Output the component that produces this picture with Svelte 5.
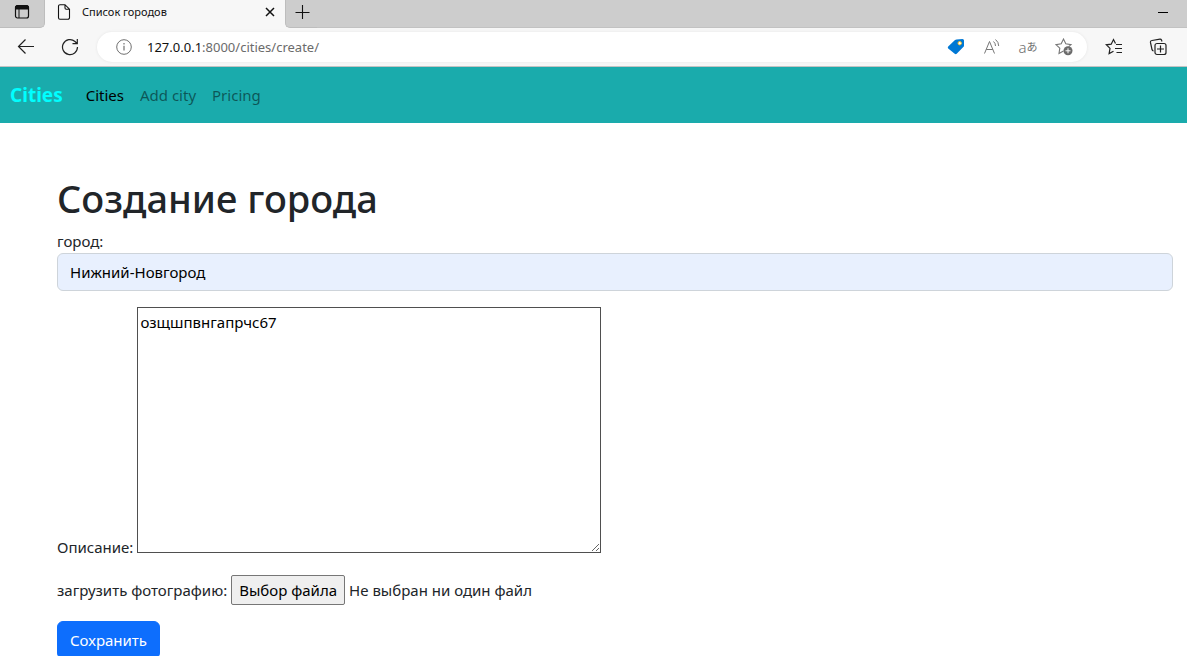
<script lang="ts">
  const links = [
    { text: 'Cities', active: true },
    { text: 'Add city', active: false },
    { text: 'Pricing', active: false },
  ];
  let address = $state('127.0.0.1:8000/cities/create/');
  let slash = $derived(address.indexOf(':'));
  let city = $state('Нижний-Новгород');
  let description = $state('озщшпвнгапрчс67');
  let fileName = $state('Не выбран ни один файл');
  let picker: HTMLInputElement;

  function picked() {
    fileName = picker.files?.[0]?.name ?? 'Не выбран ни один файл';
  }
</script>

<div class="window">
  <div class="tabs">
    <button class="workspace" aria-label="Меню вкладок">
      <svg width="16" height="16" viewBox="0 0 16 16" fill="none" stroke="#111">
        <rect x="1.5" y="1.5" width="13" height="12.5" rx="2" stroke-width="1.2" />
        <path d="M1.5 5V3.5a2 2 0 0 1 2-2h9a2 2 0 0 1 2 2V5z" fill="#111" />
        <path d="M5 5v9" />
      </svg>
    </button>
    <div class="tab">
      <svg width="14" height="16" viewBox="0 0 14 16" fill="none" stroke="#111" stroke-width="1.1">
        <path d="M8 .7H3A1.5 1.5 0 0 0 1.5 2.2v11.5A1.5 1.5 0 0 0 3 15.2h8a1.5 1.5 0 0 0 1.500-1.500V5.200zV4a1.200 1.200 0 0 0 1.200 1.200h3.300" />
      </svg>
      <span class="title">Список городов</span>
      <button class="icon close" aria-label="Закрыть вкладку">
        <svg width="10" height="10" viewBox="0 0 10 10" stroke="#111" stroke-width="1.5"><path d="M1 1l8 8M9 1L1 9" /></svg>
      </button>
    </div>
    <button class="icon add" aria-label="Новая вкладка">
      <svg width="16" height="16" viewBox="0 0 16 16" stroke="#111" stroke-width="1.1"><path d="M8.500 1v14M1.500 8.500h14" /></svg>
    </button>
    <button class="icon minimize" aria-label="Свернуть">
      <svg width="10" height="10" viewBox="0 0 10 10" stroke="#000"><path d="M0 5.500h10" /></svg>
    </button>
  </div>

  <div class="toolbar">
    <button class="icon" aria-label="Назад">
      <svg width="18" height="16" viewBox="0 0 18 16" fill="none" stroke="#222" stroke-width="1.2"><path d="M17 7.500H1.500M8.500 .5l-7 7 7 7" /></svg>
    </button>
    <button class="icon reload" aria-label="Обновить">
      <svg width="18" height="18" viewBox="0 0 18 18" fill="none" stroke="#222" stroke-width="1.2"><path d="M16.500 9A7.500 7.500 0 1 1 14 3.500l1.800 1.700M16.300 1v4.700h-4.800" /></svg>
    </button>
    <div class="address">
      <svg width="16" height="16" viewBox="0 0 16 16" fill="none" stroke="#707070"><circle cx="8" cy="8" r="7.300" /><path d="M8 6.800v4.700M8 4v1.500" stroke-width="1.200" /></svg>
      <a class="url" href="#top"><b>{address.slice(0, slash)}</b>{address.slice(slash)}</a>
      <div class="actions">
        <button class="icon" aria-label="Покупки">
          <svg width="18" height="18" viewBox="0 0 18 18"><path d="M9.500 1.500 15.500 1Q17 1 17 2.500v5q0 1-.7 1.600l-6.600 6.700q-1 .9-2 0L1.200 10.400q-.9-.9 0-1.900L8 2.100q.7-.6 1.500-.6z" fill="#0078d4" /><circle cx="12.700" cy="5.200" r="1.700" fill="#fff" stroke="#f5b820" /></svg>
        </button>
        <button class="icon" aria-label="Прочесть вслух">
          <svg width="18" height="18" viewBox="0 0 18 18" fill="none" stroke="#767676"><path d="M1.500 15.500 6.500 3.500l5 12M3.200 11.500h6.600M10.500 3.500q2 1.700 2 4.500M12.500 1.500q3.200 2.500 3.200 6.500" /></svg>
        </button>
        <button class="icon translate" aria-label="Перевести"><span>a</span>あ</button>
        <button class="icon" aria-label="В избранное">
          <svg width="18" height="18" viewBox="0 0 18 18" fill="none" stroke="#767676"><path d="M8.500 13 4 15.500l.8-5.300L1 6.600l5.200-.8 2.300-4.700 2.300 4.700 5.200.8-2.300 2" stroke-width="1.100" /><circle cx="13" cy="12.800" r="4.500" fill="#6b6b6b" stroke="none" /><path d="M13 10.300v5M10.500 12.800h5" stroke="#fff" /></svg>
        </button>
      </div>
    </div>
    <button class="icon favorites" aria-label="Избранное">
      <svg width="18" height="18" viewBox="0 0 18 18" fill="none" stroke="#222" stroke-width="1.200"><path d="M10.500 5.500 8.500 1.500 6.200 6.200l-4.900.6 3.700 3.600-.9 5.200L8.500 13.200M11 6.500h6M10 10.500h7M11.500 14.500H17" /></svg>
    </button>
    <button class="icon collections" aria-label="Коллекции">
      <svg width="18" height="18" viewBox="0 0 18 18" fill="none" stroke="#222" stroke-width="1.200"><path d="M13 3.500 12.500 2Q12 1 10.900 1.200L3 2.500Q1.200 2.800 1.400 4.200L3 11.500q.3 1.300 1.500 1.300" /><rect x="6" y="5.500" width="11" height="11" rx="2" /><path d="M11.500 7.500v7M8 11h7" /></svg>
    </button>
  </div>

  <div class="page" id="top">
    <nav>
      <a class="brand" href="#top">Cities</a>
      {#each links as link}
        <a class="link" class:active={link.active} href="#top">{link.text}</a>
      {/each}
    </nav>
    <main>
      <h1>Создание города</h1>
      <form onsubmit={(e) => e.preventDefault()}>
        <div class="field">
          <label for="city">город:</label>
          <input id="city" type="text" bind:value={city} />
        </div>
        <div class="row description">
          <label for="description">Описание:</label>
          <textarea id="description" spellcheck="false" bind:value={description}></textarea>
        </div>
        <div class="row photo">
          <label for="photo">загрузить фотографию:</label>
          <input id="photo" type="file" hidden bind:this={picker} onchange={picked} />
          <button class="choose" type="button" onclick={() => picker.click()}>Выбор файла</button>
          <span>{fileName}</span>
        </div>
        <button class="save" type="submit">Сохранить</button>
      </form>
    </main>
  </div>
</div>

<style>
  :global(body) {
    margin: 0;
    background: #fff;
  }
  .window {
    display: flex;
    flex-direction: column;
    height: 100vh;
    overflow: hidden;
    font: 15px/24px 'Noto Sans', 'Open Sans', 'Noto Sans CJK JP', sans-serif;
    color: #212529;
  }
  * {
    box-sizing: border-box;
  }
  button,
  input,
  textarea {
    font: inherit;
    margin: 0;
  }
  svg {
    display: block;
    flex: none;
  }
  .icon,
  .workspace {
    display: flex;
    align-items: center;
    justify-content: center;
    padding: 0;
    border: 0;
    background: none;
    flex: none;
  }
  .tabs {
    display: flex;
    flex: none;
    height: 28px;
    background: #f7f7f7;
  }
  .workspace {
    width: 45px;
    padding-bottom: 4px;
    background: #cdcdcd;
    border-right: 1px solid #bdbdbd;
    border-bottom: 1px solid #bdbdbd;
    border-bottom-right-radius: 5px;
  }
  .tab {
    display: flex;
    align-items: center;
    width: 240px;
    padding: 0 10px 4px 12px;
  }
  .title {
    flex: 1;
    margin-left: 11px;
    font-size: 11px;
    line-height: 16px;
    color: #111;
  }
  .close {
    width: 10px;
  }
  .add {
    width: 32px;
    padding-bottom: 4px;
    background: #cdcdcd;
    border-left: 1px solid #bdbdbd;
    border-bottom: 1px solid #bdbdbd;
    border-bottom-left-radius: 5px;
  }
  .minimize {
    flex: 1;
    justify-content: flex-end;
    padding: 0 19px 4px 0;
    background: #cdcdcd;
    border-bottom: 1px solid #c2c2c2;
  }
  .toolbar {
    display: flex;
    align-items: center;
    flex: none;
    height: 39px;
    padding: 0 20px 0 17px;
    background: #f7f7f7;
    border-bottom: 1px solid #c3c3c3;
  }
  .reload {
    margin: 0 18px 0 26px;
  }
  .address {
    display: flex;
    align-items: center;
    flex: 1;
    height: 30px;
    padding: 0 14px 0 19px;
    background: #fff;
    border-radius: 15px;
    box-shadow: 0 0 3px #e4e4e4;
  }
  .url {
    flex: 1;
    margin-left: 15px;
    font-size: 13px;
    color: #6b6b6b;
    text-decoration: none;
  }
  .url b {
    font-weight: 400;
    color: #111;
  }
  .actions {
    display: flex;
    gap: 18px;
  }
  .translate {
    width: 18px;
    font-size: 11px;
    color: #707070;
  }
  .translate span {
    font-size: 15px;
    font-weight: 300;
  }
  .favorites {
    margin: 0 26px 0 18px;
  }
  .page {
    flex: 1;
    min-height: 0;
    overflow: hidden;
  }
  nav {
    display: flex;
    align-items: center;
    gap: 16px;
    height: 56px;
    padding: 0 10px;
    background: #1aabac;
  }
  nav a {
    text-decoration: none;
  }
  .brand {
    margin-right: 7px;
    font-size: 19px;
    font-weight: 700;
    line-height: 26px;
    color: #0ff;
  }
  .link {
    color: rgba(0, 0, 0, 0.5);
  }
  .active {
    color: #000;
  }
  main {
    padding: 51px 14px 0 57px;
  }
  h1 {
    margin: 0 0 7px;
    font-size: 38px;
    font-weight: 500;
    line-height: 48px;
  }
  .field {
    margin-bottom: 16px;
  }
  .field label {
    display: block;
  }
  .field input {
    display: block;
    width: 100%;
    height: 38px;
    padding: 6px 12px;
    border: 1px solid #ced4da;
    border-radius: 6px;
    background: #e8f0fe;
    color: #000;
  }
  .row {
    display: flex;
    gap: 4px;
  }
  .description {
    align-items: flex-end;
    margin-bottom: 22px;
  }
  .description label {
    margin-bottom: -6px;
  }
  textarea {
    width: 464px;
    height: 246px;
    padding: 2px;
    border: 1px solid #4f4f4f;
    border-radius: 0;
    background: #fff;
    color: #000;
  }
  .photo {
    align-items: center;
    margin-bottom: 16px;
  }
  .choose {
    height: 30px;
    padding: 0 7px;
    border: 1px solid #767676;
    border-radius: 2px;
    background: #efefef;
    color: #000;
  }
  .save {
    height: 38px;
    padding: 0 12px;
    border: 1px solid #0d6efd;
    border-radius: 6px;
    background: #0d6efd;
    color: #fff;
  }
</style>
